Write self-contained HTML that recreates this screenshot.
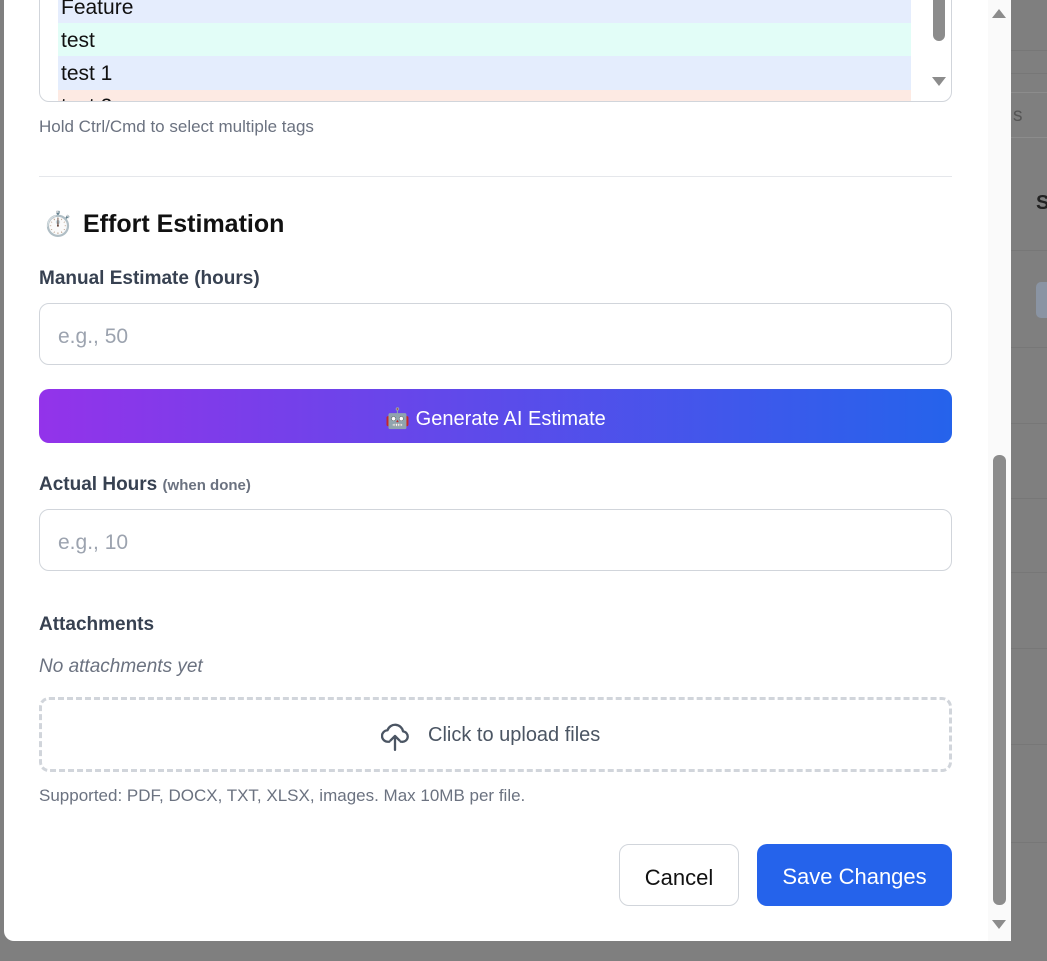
<!DOCTYPE html>
<html><head><meta charset="utf-8"><style>
*{box-sizing:border-box;margin:0;padding:0}
body{width:1047px;height:961px;background:#7f7f7f;position:relative;overflow:hidden;font-family:"Liberation Sans","Noto Sans CJK SC",sans-serif}
.a{position:absolute}
.bgl{position:absolute;left:1011px;width:36px;height:1px;background:#777}
.modal{left:4px;top:-20px;width:1007px;height:961px;background:#fff;border-radius:10px}
.lbl{font-size:19px;font-weight:bold;color:#374151;left:39px}
.inp{left:39px;width:913px;height:62px;border:1px solid #d1d5db;border-radius:10px;font-size:21px;color:#9ca3af;padding:21px 0 0 18px}
</style></head><body>
<div class="bgl" style="top:50px"></div>
<div class="bgl" style="top:73px"></div>
<div class="bgl" style="top:250px"></div>
<div class="bgl" style="top:347px"></div>
<div class="bgl" style="top:423px"></div>
<div class="bgl" style="top:498px"></div>
<div class="bgl" style="top:572px"></div>
<div class="bgl" style="top:648px"></div>
<div class="bgl" style="top:744px"></div>
<div class="bgl" style="top:842px"></div>
<div class="a" style="left:1000px;top:92px;width:60px;height:46px;border:1px solid #8c8c8c;border-radius:6px;color:#555;font-size:19px;padding:12px 0 0 12px">s</div>
<div class="a" style="left:1036px;top:192px;font-size:20px;font-weight:bold;color:#222">S</div>
<div class="a" style="left:1036px;top:282px;width:20px;height:36px;background:#8a94a3;border-radius:5px"></div>
<div class="a modal"></div>
<div class="a" style="left:39px;top:-10px;width:913px;height:112px;border:1px solid #d1d5db;border-radius:10px;overflow:hidden">
 <div class="a" style="left:18px;top:0;width:853px;height:32px;background:#e5edfd"></div>
 <div class="a" style="left:18px;top:32px;width:853px;height:33px;background:#e2fdf7"></div>
 <div class="a" style="left:18px;top:65px;width:853px;height:34px;background:#e4edfd"></div>
 <div class="a" style="left:18px;top:99px;width:853px;height:20px;background:#fdeae3"></div>
 <div class="a" style="left:21px;top:5px;font-size:21px;color:#111">Feature</div>
 <div class="a" style="left:21px;top:38px;font-size:21px;color:#111">test</div>
 <div class="a" style="left:21px;top:71px;font-size:21px;color:#111">test 1</div>
 <div class="a" style="left:21px;top:104px;font-size:21px;color:#111">test 2</div>
 <div class="a" style="left:893px;top:0;width:12px;height:50px;background:#8c8c8c;border-radius:6px"></div>
 <div class="a" style="left:892px;top:86px;width:0;height:0;border-left:7px solid transparent;border-right:7px solid transparent;border-top:9px solid #8c8c8c"></div>
</div>
<div class="a" style="left:39px;top:117px;font-size:17px;color:#6b7280">Hold Ctrl/Cmd to select multiple tags</div>
<div class="a" style="left:39px;top:176px;width:913px;height:1px;background:#e5e7eb"></div>
<div class="a" style="left:43px;top:210px;font-size:24px">⏱️</div>
<div class="a" style="left:83px;top:210px;font-size:25px;font-weight:bold;color:#111">Effort Estimation</div>
<div class="a lbl" style="top:268px">Manual Estimate (hours)</div>
<div class="a inp" style="top:303px">e.g., 50</div>
<div class="a" style="left:39px;top:389px;width:913px;height:54px;border-radius:10px;background:linear-gradient(90deg,#9333ea,#2563eb);color:#fff;font-size:20px;text-align:center;padding-top:17px">🤖 Generate AI Estimate</div>
<div class="a lbl" style="top:474px">Actual Hours <span style="font-size:15px;color:#6b7280">(when done)</span></div>
<div class="a inp" style="top:509px">e.g., 10</div>
<div class="a lbl" style="top:614px">Attachments</div>
<div class="a" style="left:39px;top:656px;font-size:19px;font-style:italic;color:#6b7280">No attachments yet</div>
<div class="a" style="left:39px;top:697px;width:913px;height:75px;border:3px dashed #d1d5db;border-radius:10px"></div>
<svg class="a" style="left:381px;top:721px" width="28" height="30" viewBox="0 0 24 26" fill="none" stroke="#4b5563" stroke-width="2" stroke-linecap="round" stroke-linejoin="round"><path d="M7 18H6a5 5 0 0 1-.5-10A7 7 0 0 1 19 9a4.5 4.5 0 0 1-1 9h-1"/><path d="M12 25V13M8 17l4-4 4 4"/></svg>
<div class="a" style="left:428px;top:724px;font-size:20px;color:#4b5563">Click to upload files</div>
<div class="a" style="left:39px;top:786px;font-size:17px;color:#6b7280">Supported: PDF, DOCX, TXT, XLSX, images. Max 10MB per file.</div>
<div class="a" style="left:619px;top:844px;width:120px;height:62px;border:1px solid #d1d5db;border-radius:10px;font-size:22px;color:#111;text-align:center;padding-top:20px">Cancel</div>
<div class="a" style="left:757px;top:844px;width:195px;height:62px;background:#2563eb;border-radius:10px;font-size:22px;color:#fff;text-align:center;padding-top:20px">Save Changes</div>
<div class="a" style="left:988px;top:0;width:23px;height:941px;background:#fafafa"></div>
<div class="a" style="left:992px;top:9px;width:0;height:0;border-left:7px solid transparent;border-right:7px solid transparent;border-bottom:9px solid #8c8c8c"></div>
<div class="a" style="left:993px;top:455px;width:13px;height:450px;background:#8c8c8c;border-radius:6px"></div>
<div class="a" style="left:992px;top:920px;width:0;height:0;border-left:7px solid transparent;border-right:7px solid transparent;border-top:9px solid #8c8c8c"></div>
</body></html>
